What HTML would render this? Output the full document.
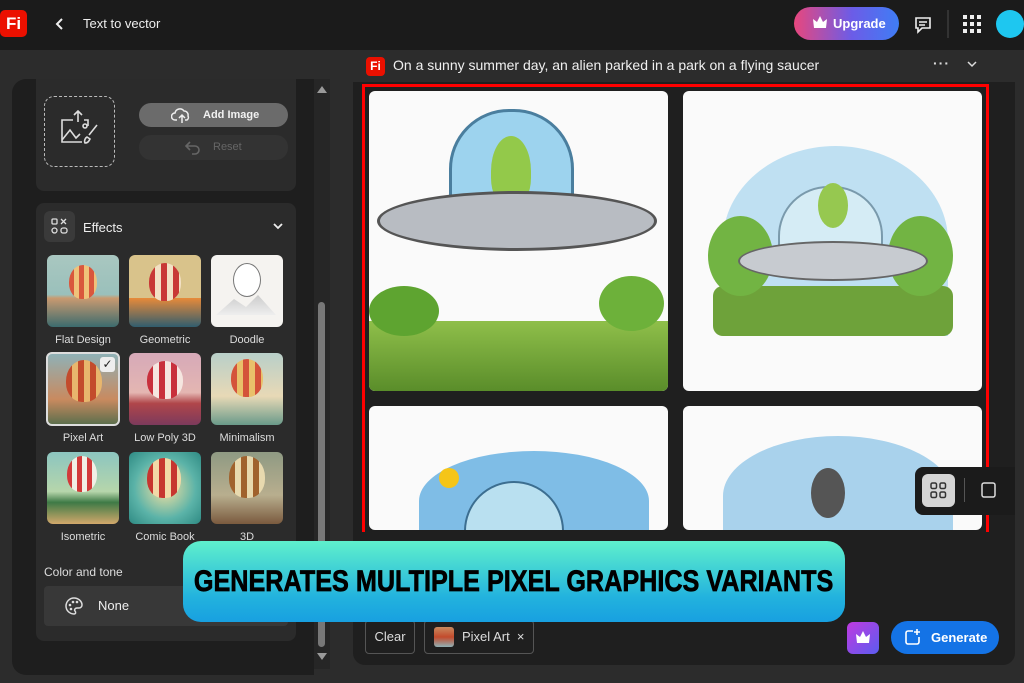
<!DOCTYPE html>
<html><head><meta charset="utf-8"><style>
*{box-sizing:border-box;margin:0;padding:0}
body{width:1024px;height:683px;overflow:hidden;background:#2c2c2c;font-family:"Liberation Sans",sans-serif;color:#e8e8e8;position:relative}
.a{position:absolute}
.hdr{left:0;top:0;width:1024px;height:50px;background:#1b1b1b}
.thumb{position:absolute;width:72px;height:72px;border-radius:6px;overflow:hidden}
.lbl{position:absolute;width:82px;text-align:center;font-size:11px;color:#ddd}
.cell{position:absolute;background:#fafafa;border-radius:6px;overflow:hidden}
</style></head><body>
<div class="a hdr"></div>
<div class="a" style="left:0;top:10px;width:27px;height:27px;background:#eb1000;border-radius:5px;color:#fff;font-weight:bold;font-size:17px;line-height:27px;text-align:center">Fi</div>
<svg class="a" style="left:54px;top:17px" width="12" height="14"><path d="M8 2L3 7l5 5" stroke="#eee" stroke-width="2" fill="none"/></svg>
<div class="a" style="left:83px;top:16px;font-size:13px;color:#eee">Text to vector</div>
<div class="a" style="left:794px;top:7px;width:105px;height:33px;border-radius:17px;background:linear-gradient(90deg,#e8477d,#6c5ce7 55%,#3f7df5);color:#fff;font-weight:bold;font-size:13px;line-height:33px;padding-left:39px">Upgrade</div>
<svg class="a" style="left:812px;top:15px" width="16" height="14"><path d="M1 4l4 3 3-6 3 6 4-3-1 9H2z" fill="#fff"/></svg>
<svg class="a" style="left:914px;top:16px" width="18" height="18"><path d="M2 2h14v10H8l-4 4v-4H2z" stroke="#eee" stroke-width="1.6" fill="none"/><path d="M5 6h8M5 9h6" stroke="#eee" stroke-width="1.4"/></svg>
<div class="a" style="left:947px;top:10px;width:2px;height:28px;background:#333"></div>
<svg class="a" style="left:963px;top:15px" width="18" height="18"><g fill="#eee"><rect x="0" y="0" width="4" height="4"/><rect x="7" y="0" width="4" height="4"/><rect x="14" y="0" width="4" height="4"/><rect x="0" y="7" width="4" height="4"/><rect x="7" y="7" width="4" height="4"/><rect x="14" y="7" width="4" height="4"/><rect x="0" y="14" width="4" height="4"/><rect x="7" y="14" width="4" height="4"/><rect x="14" y="14" width="4" height="4"/></g></svg>
<div class="a" style="left:996px;top:10px;width:28px;height:28px;border-radius:50%;background:#1ec7f0"></div>

<!-- left panel -->
<div class="a" style="left:12px;top:79px;width:302px;height:596px;background:#1e1e1e;border-radius:14px 0 0 14px"></div>
<div class="a" style="left:314px;top:79px;width:16px;height:590px;background:#262626"></div>
<div class="a" style="left:318px;top:302px;width:7px;height:345px;background:#777;border-radius:4px"></div>
<svg class="a" style="left:316px;top:84px" width="12" height="10"><path d="M1 9L6 2l5 7z" fill="#999"/></svg>
<svg class="a" style="left:316px;top:652px" width="12" height="10"><path d="M1 1l5 7 5-7z" fill="#999"/></svg>
<div class="a" style="left:36px;top:79px;width:260px;height:112px;background:#2b2b2b;border-radius:0 0 8px 8px"></div>
<div class="a" style="left:44px;top:96px;width:71px;height:71px;border:1.5px dashed #bbb;border-radius:10px"></div>
<svg class="a" style="left:59px;top:110px" width="44" height="40"><g stroke="#ddd" stroke-width="1.6" fill="none"><path d="M19 12V1M15 5l4-4 4 4"/><path d="M14 10H3v22h20"/><path d="M3 30l8-10 6 8 4-4"/><circle cx="26" cy="16" r="2"/><path d="M25 10h4v6"/><path d="M38 15l-8 10M28 27c-2 1-3 4-2 6 3 0 4-2 5-4z"/></g></svg>
<div class="a" style="left:139px;top:103px;width:149px;height:24px;background:#6b6b6b;border-radius:12px;font-size:11px;font-weight:bold;line-height:24px;padding-left:64px;color:#f2f2f2">Add Image</div>
<svg class="a" style="left:171px;top:106px" width="22" height="18"><path d="M6 14H4a3.5 3.5 0 010-7 5 5 0 019-2 4 4 0 014 5 3 3 0 01-1 4h-2M11 17V9M8 12l3-3 3 3" stroke="#eee" stroke-width="1.5" fill="none"/></svg>
<div class="a" style="left:139px;top:135px;width:149px;height:25px;background:#333;border-radius:12px;font-size:11px;line-height:25px;padding-left:74px;color:#666">Reset</div>
<svg class="a" style="left:184px;top:140px" width="18" height="16"><path d="M6 2L2 6l4 4M2 6h9a4 4 0 010 8H8" stroke="#666" stroke-width="1.6" fill="none"/></svg>

<div class="a" style="left:36px;top:203px;width:260px;height:438px;background:#2b2b2b;border-radius:8px"></div>
<div class="a" style="left:44px;top:211px;width:31px;height:31px;background:#3a3a3a;border-radius:6px"></div>
<svg class="a" style="left:51px;top:218px" width="17" height="17"><g stroke="#ddd" stroke-width="1.3" fill="none"><rect x="1" y="1" width="5" height="5" rx="1"/><path d="M10 1l5 5M15 1l-5 5"/><rect x="1" y="10" width="5" height="5" rx="2.5"/><rect x="10" y="10" width="6" height="5" rx="2"/></g></svg>
<div class="a" style="left:83px;top:220px;font-size:13px;color:#eee">Effects</div>
<svg class="a" style="left:272px;top:222px" width="12" height="10"><path d="M2 2l4 4 4-4" stroke="#eee" stroke-width="1.8" fill="none"/></svg>

<div class="thumb" style="left:47px;top:255px;background:linear-gradient(#a9c7c0,#9ac0bb 55%,#c99a70 60%,#3c6b6e)"><div class="a" style="left:22px;top:10px;width:28px;height:34px;border-radius:50% 50% 45% 45%;background:repeating-linear-gradient(90deg,#d9573d 0 5px,#f0c27a 5px 10px)"></div></div>
<div class="thumb" style="left:129px;top:255px;background:linear-gradient(#d9c38b,#d9c38b 60%,#e68a3a 60%,#315d6e)"><div class="a" style="left:20px;top:8px;width:32px;height:38px;border-radius:50% 50% 45% 45%;background:repeating-linear-gradient(90deg,#c83836 0 6px,#f2e0c4 6px 12px)"></div></div>
<div class="thumb" style="left:211px;top:255px;background:#f5f3f0"><div class="a" style="left:22px;top:8px;width:28px;height:34px;border-radius:50%;border:1px solid #777;background:#fff"></div><div class="a" style="left:5px;top:40px;width:60px;height:20px;background:linear-gradient(#ccc,#eee);clip-path:polygon(0 100%,30% 20%,50% 60%,70% 0,100% 100%)"></div></div>
<div class="lbl" style="left:42px;top:334px">Flat Design</div>
<div class="lbl" style="left:124px;top:334px">Geometric</div>
<div class="lbl" style="left:206px;top:334px">Doodle</div>

<div class="thumb" style="left:46px;top:352px;width:74px;height:74px;border:2px solid #ddd;background:linear-gradient(#8fb1b6,#c98a5f 65%,#5d6f4d)"><div class="a" style="left:18px;top:6px;width:36px;height:42px;border-radius:50% 50% 45% 45%;background:repeating-linear-gradient(90deg,#c34b2c 0 6px,#e8b66d 6px 12px)"></div><div class="a" style="right:3px;top:3px;width:15px;height:15px;background:#eee;border-radius:3px;color:#222;font-size:12px;line-height:15px;text-align:center">✓</div></div>
<div class="thumb" style="left:129px;top:353px;background:linear-gradient(#d6a9b8,#e4b6b2 55%,#b0464a 70%,#7c3a5c)"><div class="a" style="left:18px;top:8px;width:36px;height:38px;border-radius:50% 50% 45% 45%;background:repeating-linear-gradient(90deg,#c8303c 0 6px,#f5e6e0 6px 12px)"></div></div>
<div class="thumb" style="left:211px;top:353px;background:linear-gradient(#b8cfc9,#e8d9b6 60%,#6a9a8a)"><div class="a" style="left:20px;top:6px;width:32px;height:38px;border-radius:50% 50% 45% 45%;background:repeating-linear-gradient(90deg,#d4533a 0 6px,#e9c06a 6px 12px)"></div></div>
<div class="lbl" style="left:42px;top:432px">Pixel Art</div>
<div class="lbl" style="left:124px;top:432px">Low Poly 3D</div>
<div class="lbl" style="left:206px;top:432px">Minimalism</div>

<div class="thumb" style="left:47px;top:452px;background:linear-gradient(#8cc5c0,#b6d6ab 55%,#3e7a46 70%,#d2a86b)"><div class="a" style="left:20px;top:4px;width:30px;height:36px;border-radius:50% 50% 45% 45%;background:repeating-linear-gradient(90deg,#d23a3a 0 5px,#f1efe5 5px 10px)"></div></div>
<div class="thumb" style="left:129px;top:452px;background:radial-gradient(#f7e2a1,#5bb3a8 60%,#2e8a83)"><div class="a" style="left:18px;top:6px;width:34px;height:40px;border-radius:50% 50% 45% 45%;background:repeating-linear-gradient(90deg,#c7362f 0 6px,#f2d9a7 6px 12px)"></div></div>
<div class="thumb" style="left:211px;top:452px;background:linear-gradient(#8f9a83,#b8ae8e 60%,#7a5a3e)"><div class="a" style="left:18px;top:4px;width:36px;height:42px;border-radius:50% 50% 45% 45%;background:repeating-linear-gradient(90deg,#a0622d 0 6px,#e8d9ae 6px 12px)"></div></div>
<div class="lbl" style="left:42px;top:531px">Isometric</div>
<div class="lbl" style="left:124px;top:531px">Comic Book</div>
<div class="lbl" style="left:206px;top:531px">3D</div>

<div class="a" style="left:44px;top:565px;font-size:12px;color:#ddd">Color and tone</div>
<div class="a" style="left:44px;top:586px;width:244px;height:40px;background:#383838;border-radius:4px"></div>
<svg class="a" style="left:64px;top:596px" width="20" height="20"><path d="M10 2a8 8 0 100 16c2 0 2-2 1-3s0-3 2-3h2a3 3 0 003-3c0-4-4-7-8-7z" stroke="#ddd" stroke-width="1.5" fill="none"/><circle cx="6" cy="9" r="1.3" fill="#ddd"/><circle cx="9" cy="6" r="1.3" fill="#ddd"/><circle cx="13" cy="6" r="1.3" fill="#ddd"/><circle cx="7" cy="13" r="1.3" fill="#ddd"/></svg>
<div class="a" style="left:98px;top:598px;font-size:13px;color:#eee">None</div>

<!-- main -->
<div class="a" style="left:366px;top:57px;width:19px;height:19px;background:#eb1000;border-radius:4px;color:#fff;font-weight:bold;font-size:12px;line-height:19px;text-align:center">Fi</div>
<div class="a" style="left:393px;top:57px;font-size:14px;color:#f0f0f0">On a sunny summer day, an alien parked in a park on a flying saucer</div>
<div class="a" style="left:933px;top:55px;font-size:14px;font-weight:bold;color:#ddd;letter-spacing:1px">···</div>
<svg class="a" style="left:966px;top:60px" width="12" height="10"><path d="M2 2l4 4 4-4" stroke="#ddd" stroke-width="1.5" fill="none"/></svg>

<div class="a" style="left:353px;top:82px;width:662px;height:450px;background:#1f1f1f"></div>
<div class="cell" style="left:369px;top:91px;width:299px;height:300px">
 <div class="a" style="left:0;top:230px;width:299px;height:70px;background:linear-gradient(#8fbf4a,#5a8d2a)"></div>
 <div class="a" style="left:80px;top:18px;width:125px;height:110px;border-radius:60px 60px 0 0;background:#9dd3ee;border:3px solid #4a7e9e"></div>
 <div class="a" style="left:122px;top:45px;width:40px;height:70px;border-radius:50% 50% 40% 40%;background:#93c94a"></div>
 <div class="a" style="left:8px;top:100px;width:280px;height:60px;border-radius:50%;background:#b8bcc2;border:3px solid #555"></div>
 <div class="a" style="left:0;top:195px;width:70px;height:50px;border-radius:50%;background:#5ea430"></div>
 <div class="a" style="left:230px;top:185px;width:65px;height:55px;border-radius:50%;background:#6db13a"></div>
</div>
<div class="cell" style="left:683px;top:91px;width:299px;height:300px">
 <div class="a" style="left:40px;top:55px;width:225px;height:190px;border-radius:50% 50% 0 0;background:#bfe0f2"></div>
 <div class="a" style="left:30px;top:195px;width:240px;height:50px;background:#6ea23a;border-radius:10px"></div>
 <div class="a" style="left:25px;top:125px;width:65px;height:80px;border-radius:50%;background:#72b443"></div>
 <div class="a" style="left:205px;top:125px;width:65px;height:80px;border-radius:50%;background:#72b443"></div>
 <div class="a" style="left:95px;top:95px;width:105px;height:80px;border-radius:50px 50px 0 0;background:#d5ecf5;border:2px solid #7a9aac"></div>
 <div class="a" style="left:135px;top:92px;width:30px;height:45px;border-radius:50%;background:#96c850"></div>
 <div class="a" style="left:55px;top:150px;width:190px;height:40px;border-radius:50%;background:#c7cbd0;border:2px solid #666"></div>
</div>
<div class="cell" style="left:369px;top:406px;width:299px;height:124px">
 <div class="a" style="left:50px;top:45px;width:230px;height:100px;border-radius:50% 50% 0 0;background:#7fbde6"></div>
 <div class="a" style="left:95px;top:75px;width:100px;height:70px;border-radius:50px 50px 0 0;background:#b9e0f0;border:2px solid #3c6e90"></div>
 <div class="a" style="left:70px;top:62px;width:20px;height:20px;border-radius:50%;background:#f5c518"></div>
</div>
<div class="cell" style="left:683px;top:406px;width:299px;height:124px">
 <div class="a" style="left:40px;top:30px;width:230px;height:120px;border-radius:50% 50% 0 0;background:#a9d2ec"></div>
 <div class="a" style="left:128px;top:62px;width:34px;height:50px;border-radius:50%;background:#555"></div>
</div>
<div class="a" style="left:362px;top:84px;width:627px;height:452px;border:3px solid #f00"></div>
<div class="a" style="left:915px;top:467px;width:100px;height:48px;background:#1b1b1b;border-radius:8px 0 0 8px"></div>
<div class="a" style="left:922px;top:474px;width:33px;height:33px;background:#d5d5d5;border-radius:6px"></div>
<svg class="a" style="left:930px;top:482px" width="17" height="17"><g stroke="#333" stroke-width="1.5" fill="none"><rect x="1" y="1" width="5.5" height="5.5" rx="1.5"/><rect x="10" y="1" width="5.5" height="5.5" rx="1.5"/><rect x="1" y="10" width="5.5" height="5.5" rx="1.5"/><rect x="10" y="10" width="5.5" height="5.5" rx="1.5"/></g></svg>
<div class="a" style="left:964px;top:478px;width:1px;height:24px;background:#555"></div>
<svg class="a" style="left:981px;top:482px" width="16" height="18"><rect x="1" y="1" width="13" height="14" rx="2" stroke="#ddd" stroke-width="1.5" fill="none"/></svg>

<div class="a" style="left:353px;top:532px;width:662px;height:133px;background:#1f1f1f;border-radius:0 0 12px 12px"></div>
<div class="a" style="left:365px;top:620px;width:50px;height:34px;border:1px solid #555;border-radius:4px;font-size:13px;line-height:32px;text-align:center;color:#ddd">Clear</div>
<div class="a" style="left:424px;top:620px;width:110px;height:34px;border:1px solid #555;border-radius:4px;font-size:13px;line-height:32px;padding-left:37px;color:#ddd">Pixel Art &nbsp;×</div>
<div class="a" style="left:434px;top:627px;width:20px;height:20px;border-radius:3px;background:linear-gradient(#c98a5f,#c34b2c 50%,#8fb1b6)"></div>
<div class="a" style="left:847px;top:622px;width:32px;height:32px;border-radius:6px;background:linear-gradient(135deg,#c03ae0,#5b5cf0)"></div>
<svg class="a" style="left:855px;top:630px" width="16" height="14"><path d="M1 4l4 3 3-6 3 6 4-3-1 9H2z" fill="#fff"/></svg>
<div class="a" style="left:891px;top:621px;width:108px;height:33px;border-radius:17px;background:#1473e6;color:#fff;font-size:13px;font-weight:bold;line-height:33px;padding-left:40px">Generate</div>
<svg class="a" style="left:904px;top:628px" width="18" height="18"><path d="M9 3H4a2 2 0 00-2 2v9a2 2 0 002 2h9a2 2 0 002-2V9" stroke="#fff" stroke-width="1.6" fill="none"/><path d="M13 1v6M10 4h6" stroke="#fff" stroke-width="1.6"/></svg>

<div class="a" style="left:183px;top:541px;width:662px;height:81px;border-radius:18px;background:linear-gradient(#5ff0cc,#22b2de 70%,#18a0e0)"></div>
<div class="a" style="left:183px;top:541px;width:662px;height:81px;display:flex;justify-content:center;align-items:center;white-space:nowrap;font-size:30px;font-weight:bold;color:#000;font-family:'Liberation Sans',sans-serif"><span style="display:inline-block;flex:none;transform:scaleX(0.84);transform-origin:center;white-space:nowrap;-webkit-text-stroke:0.7px #000">GENERATES MULTIPLE PIXEL GRAPHICS VARIANTS</span></div>
</body></html>
